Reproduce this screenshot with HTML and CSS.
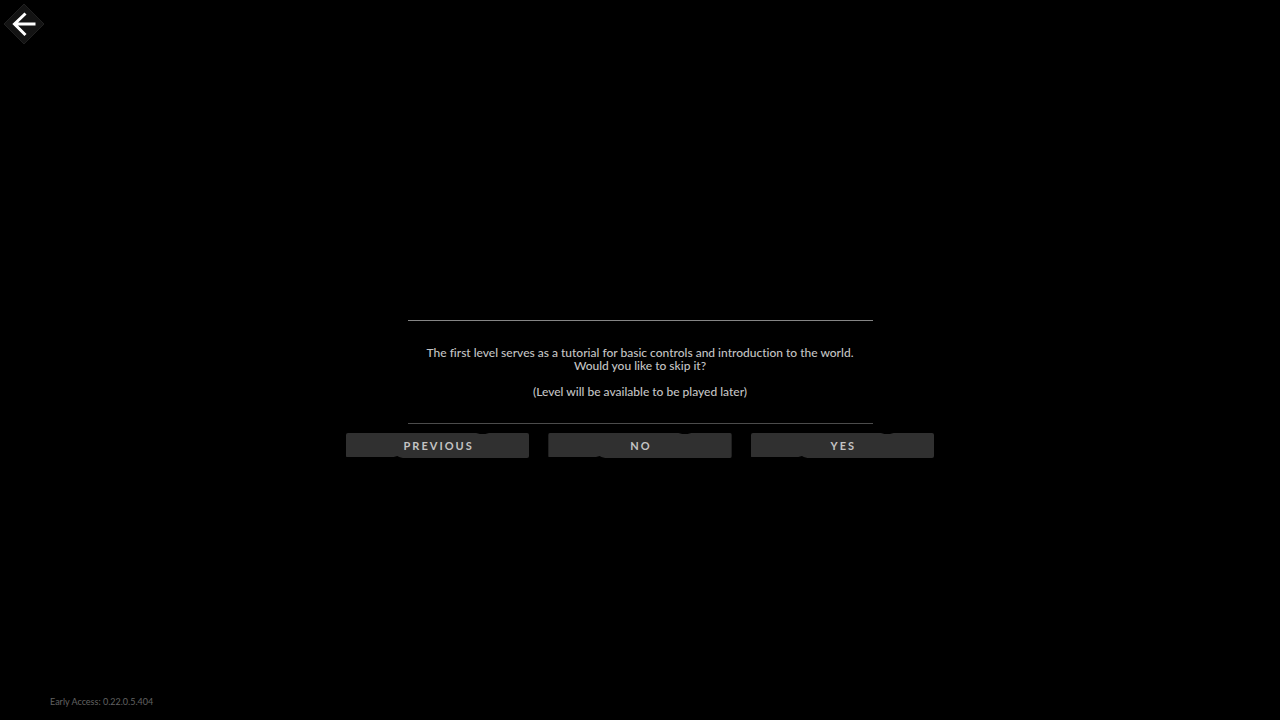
FILE: index.html
```
<!DOCTYPE html>
<html lang="en">
<head>
	<meta charset="UTF-8">
	<title>Skip tutorial</title>
	<link rel="stylesheet" href="styles.css">
</head>
<body>
	<header>
		<button class="back" type="button" aria-label="Back">
			<svg viewBox="0 0 42 42" width="42" height="42">
				<path class="diamond" d="M21 1 L41 21 L21 41 L1 21 Z"/>
				<path class="arrow" d="M32.500 21 H12 M22.500 10.500 L11.500 21 L22.500 32"/>
			</svg>
		</button>
	</header>
	<main>
		<div class="message">
			<p>The first level serves as a tutorial for basic controls and introduction to the world.<br>Would you like to skip it?</p>
			<p>(Level will be available to be played later)</p>
		</div>
		<div class="choices">
			<button type="button">PREVIOUS</button>
			<button type="button">NO</button>
			<button type="button">YES</button>
		</div>
	</main>
	<footer>Early Access: 0.22.0.5.404</footer>
</body>
</html>
```

FILE: styles.css
```
*{
	margin: 0;
	padding: 0;
	box-sizing: border-box;
}
body{
	min-height: 100vh;
	display: flex;
	flex-direction: column;
	background: #000;
	color: #c4c4c4;
	font-family: Lato, "Liberation Sans", sans-serif;
	font-variant-ligatures: none;
}
button{
	border: 0;
	color: inherit;
	font-family: inherit;
	cursor: pointer;
}
header{
	padding: 3px;
}
.back{
	display: block;
	width: 42px;
	height: 42px;
	background: none;
}
.back svg{
	display: block;
}
.diamond{
	fill: #131313;
	stroke: #202020;
}
.arrow{
	fill: none;
	stroke: #fff;
	stroke-width: 3;
}
main{
	flex: 1;
	display: flex;
	flex-direction: column;
	align-items: center;
	justify-content: center;
	gap: 9px;
	padding: 36px 20px 0;
}
.message{
	display: flex;
	flex-direction: column;
	gap: 13px;
	width: 100%;
	max-width: 465px;
	padding: 25px 12px;
	border-top: 1px solid #858585;
	border-bottom: 1px solid #4c4c4c;
	font-size: 12px;
	font-weight: 500;
	line-height: 13px;
	text-align: center;
}
.choices{
	display: grid;
	grid-template-columns: repeat(3, 1fr);
	gap: 19px;
	width: 100%;
	max-width: 588px;
}
/* worn edges: a nick at the top right and one at the bottom left */
.choices button{
	height: 25px;
	border-radius: 2px;
	background: #303030;
	font-size: 11px;
	font-weight: 700;
	letter-spacing: 2px;
	text-indent: 2px;
	clip-path: polygon(0 0, 71% 0, 73% 1px, 76% 1px, 78% 0, 100% 0, 100% 100%, 31% 100%, 29% 24px, 28% 23px, 26% 24px, 0 24px);
}
footer{
	padding: 0 50px 10px;
	color: #626262;
	font-size: 9px;
	line-height: 16px;
}
```
